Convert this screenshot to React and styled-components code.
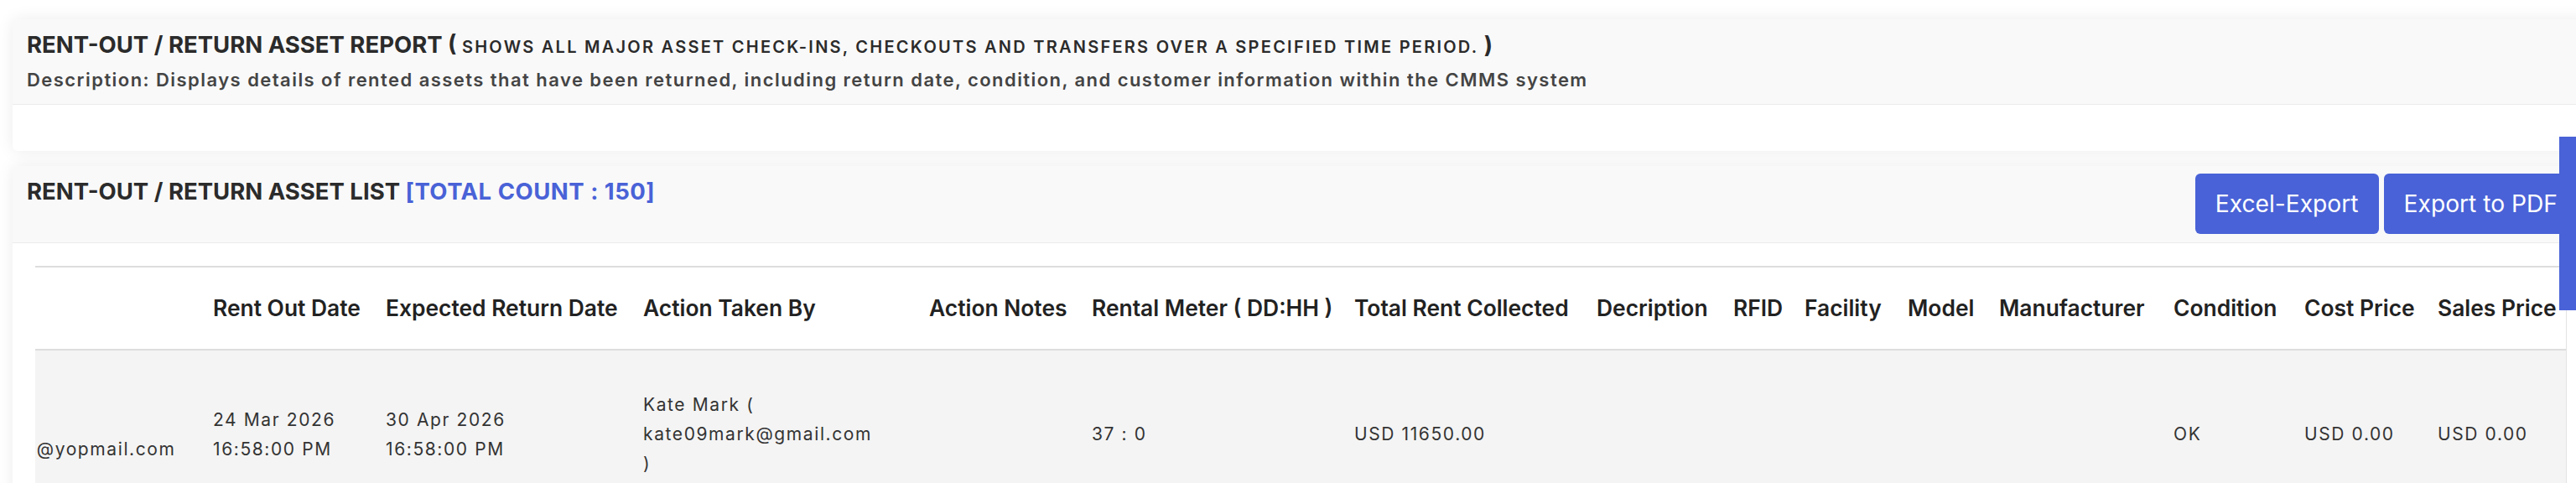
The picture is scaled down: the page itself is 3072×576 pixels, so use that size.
import React, { useLayoutEffect, useRef } from "react";
import styled, { createGlobalStyle } from "styled-components";

const BLUE = "#4962d7";
const FONT = `Inter, "Noto Sans", "Liberation Sans", sans-serif`;

const GlobalStyle = createGlobalStyle`
  html, body {
    margin: 0;
    padding: 0;
    overflow: hidden;
    background: #ffffff;
    font-family: ${FONT};
  }
  * { box-sizing: border-box; }
`;

const Page = styled.main`
  width: 3089px;
  padding: 23px 0 0 15px;
  display: flex;
  flex-direction: column;
  gap: 18px;
`;

const Card = styled.section`
  background: #ffffff;
  border-radius: 6px;
  box-shadow: 0 0 20px rgba(0, 0, 0, 0.08);
  overflow: hidden;
`;

const CardHeader = styled.header`
  background: #f9f9f9;
  border-bottom: 1px solid #ececec;
  padding: ${(p) => p.$pad};
  display: flex;
  flex-direction: ${(p) => (p.$row ? "row" : "column")};
  justify-content: space-between;
  align-items: flex-start;
`;

const Title = styled.h2`
  margin: ${(p) => (p.$offset ? `${p.$offset}px 0 0` : "0")};
  font-family: ${FONT};
  font-weight: 700;
  font-size: 27.5px;
  line-height: 34px;
  color: #2b2b2b;
  white-space: nowrap;
`;

const TitleNote = styled.span`
  font-weight: 600;
  font-size: 20px;
  line-height: 1;
  letter-spacing: 2.25px;
`;

const Count = styled.span`
  color: ${BLUE};
  letter-spacing: 0.5px;
`;

const Description = styled.p`
  margin: 11px 0 0;
  font-weight: 600;
  font-size: 22px;
  line-height: 28px;
  letter-spacing: 1.45px;
  color: #444444;
  white-space: nowrap;
`;

const CardBody = styled.div`
  min-height: ${(p) => p.$min || 0}px;
  padding: ${(p) => p.$pad || "0"};
`;

const Actions = styled.div`
  display: flex;
  gap: 6px;
`;

const Button = styled.button`
  height: 72px;
  padding: 0 24px;
  border: none;
  border-radius: 6px;
  background: ${BLUE};
  color: #ffffff;
  font-family: ${FONT};
  font-weight: 400;
  font-size: 28.2px;
  display: inline-flex;
  align-items: center;
  white-space: nowrap;
  cursor: pointer;
`;

const TableScroll = styled.div`
  overflow-x: auto;
  border-right: 1px solid #e3e3e3;
`;

const Table = styled.table`
  table-layout: fixed;
  border-collapse: separate;
  border-spacing: 0;
  width: ${(p) => p.$width}px;
`;

const Th = styled.th`
  width: ${(p) => p.$w}px;
  padding: 28px 15px;
  border-top: 2px solid #dddddd;
  background: #ffffff;
  text-align: left;
  vertical-align: middle;
  white-space: nowrap;
  font-family: ${FONT};
  font-weight: 600;
  font-size: 26.4px;
  line-height: 41px;
  color: #222222;
`;

const BodyRow = styled.tr`
  background: #f4f4f4;
`;

const Td = styled.td`
  padding: 47px ${(p) => p.$pr || 15}px 47px 15px;
  border-top: 2px solid #dddddd;
  text-align: left;
  vertical-align: middle;
  font-family: ${FONT};
  font-weight: 400;
  font-size: 21px;
  line-height: 35px;
  letter-spacing: 1.6px;
  color: #333333;
  overflow: hidden;
`;

const Line = styled.div`
  white-space: nowrap;
`;

const SideTab = styled.div`
  position: fixed;
  top: 163px;
  right: 0;
  width: 20px;
  height: 207px;
  background: ${BLUE};
`;

const columns = [
  { key: "to", label: "Customer", w: 366 },
  { key: "out", label: "Rent Out Date", w: 206 },
  { key: "exp", label: "Expected Return Date", w: 307 },
  { key: "by", label: "Action Taken By", w: 341, pr: 46 },
  { key: "notes", label: "Action Notes", w: 194 },
  { key: "meter", label: "Rental Meter ( DD:HH )", w: 313 },
  { key: "rent", label: "Total Rent Collected", w: 289 },
  { key: "desc", label: "Decription", w: 163 },
  { key: "rfid", label: "RFID", w: 85 },
  { key: "facility", label: "Facility", w: 123 },
  { key: "model", label: "Model", w: 109 },
  { key: "mfr", label: "Manufacturer", w: 208 },
  { key: "cond", label: "Condition", w: 156 },
  { key: "cost", label: "Cost Price", w: 159 },
  { key: "sales", label: "Sales Price", w: 168 },
];

const tableWidth = columns.reduce((s, c) => s + c.w, 0);

const row = {
  to: [<Line key="a">Tom Wilson</Line>, <Line key="b">thomaswilson@yopmail.com</Line>],
  out: [<Line key="a">24 Mar 2026</Line>, <Line key="b">16:58:00 PM</Line>],
  exp: [<Line key="a">30 Apr 2026</Line>, <Line key="b">16:58:00 PM</Line>],
  by: "Kate Mark ( kate09mark@gmail.com )",
  notes: "",
  meter: "37 : 0",
  rent: "USD 11650.00",
  desc: "",
  rfid: "",
  facility: "",
  model: "",
  mfr: "",
  cond: "OK",
  cost: "USD 0.00",
  sales: "USD 0.00",
};

function AssetTable() {
  const ref = useRef(null);
  useLayoutEffect(() => {
    const el = ref.current;
    if (el) el.scrollLeft = el.scrollWidth - el.clientWidth;
  }, []);
  return (
    <TableScroll ref={ref}>
      <Table $width={tableWidth}>
        <thead>
          <tr>
            {columns.map((c) => (
              <Th key={c.key} $w={c.w}>
                {c.label}
              </Th>
            ))}
          </tr>
        </thead>
        <tbody>
          <BodyRow>
            {columns.map((c) => (
              <Td key={c.key} $pr={c.pr}>
                {row[c.key]}
              </Td>
            ))}
          </BodyRow>
        </tbody>
      </Table>
    </TableScroll>
  );
}

export default function App() {
  return (
    <>
      <GlobalStyle />
      <Page>
        <Card>
          <CardHeader $pad="13px 17px 15px">
            <Title>
              RENT-OUT / RETURN ASSET REPORT ({" "}
              <TitleNote>
                SHOWS ALL MAJOR ASSET CHECK-INS, CHECKOUTS AND TRANSFERS OVER A SPECIFIED TIME PERIOD.
              </TitleNote>{" "}
              )
            </Title>
            <Description>
              Description: Displays details of rented assets that have been returned, including return
              date, condition, and customer information within the CMMS system
            </Description>
          </CardHeader>
          <CardBody $min={55} />
        </Card>

        <Card>
          <CardHeader $row $pad="9px 15px 10px 17px">
            <Title $offset={4}>
              RENT-OUT / RETURN ASSET LIST <Count>[TOTAL COUNT : 150]</Count>
            </Title>
            <Actions>
              <Button type="button">Excel-Export</Button>
              <Button type="button">Export to PDF</Button>
            </Actions>
          </CardHeader>
          <CardBody $pad="27px 28px 0 27px">
            <AssetTable />
          </CardBody>
        </Card>
      </Page>
      <SideTab />
    </>
  );
}
